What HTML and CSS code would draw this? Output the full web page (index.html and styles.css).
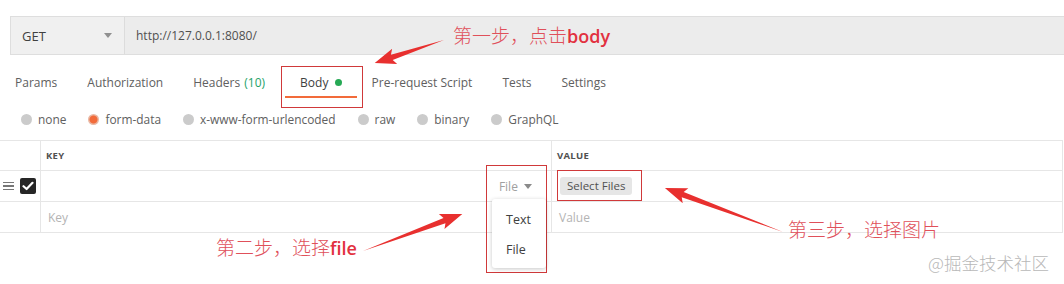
FILE: index.html
```html
<!DOCTYPE html>
<html lang="zh-CN">
<head>
  <meta charset="UTF-8" />
  <title>Postman form-data</title>
  <link rel="stylesheet" href="styles.css">
</head>
<body>

  <div class="request-bar">
    <div class="method">
      <span>GET</span>
      <span class="caret"></span>
    </div>
    <div class="url">http://127.0.0.1:8080/</div>
  </div>

  <nav class="tabs">
    <a class="tab">Params</a>
    <a class="tab">Authorization</a>
    <a class="tab">Headers <span class="count">(10)</span></a>
    <a class="tab active">Body <span class="dot"></span></a>
    <a class="tab">Pre-request Script</a>
    <a class="tab">Tests</a>
    <a class="tab">Settings</a>
  </nav>

  <div class="body-types">
    <label class="radio"><span class="circle"></span>none</label>
    <label class="radio"><span class="circle checked"></span>form-data</label>
    <label class="radio"><span class="circle"></span>x-www-form-urlencoded</label>
    <label class="radio"><span class="circle"></span>raw</label>
    <label class="radio"><span class="circle"></span>binary</label>
    <label class="radio"><span class="circle"></span>GraphQL</label>
  </div>

  <div class="kv-table">
    <div class="kv-row head">
      <div class="cell lead"></div>
      <div class="cell key">KEY</div>
      <div class="cell value">VALUE</div>
    </div>
    <div class="kv-row">
      <div class="cell lead">
        <span class="handle"><i></i><i></i><i></i></span>
        <span class="check">
          <svg width="12" height="10" viewBox="0 0 12 10"><path d="M1.5 5.2 L4.6 8 L10.5 1.8" fill="none" stroke="#fff" stroke-width="2.2" stroke-linecap="round" stroke-linejoin="round"/></svg>
        </span>
      </div>
      <div class="cell key type-cell">
        <span class="type-select">File <span class="caret small"></span></span>
        <div class="menu">
          <div class="menu-item">Text</div>
          <div class="menu-item">File</div>
        </div>
      </div>
      <div class="cell value">
        <span class="file-btn">Select Files</span>
      </div>
    </div>
    <div class="kv-row">
      <div class="cell lead"></div>
      <div class="cell key placeholder">Key</div>
      <div class="cell value placeholder">Value</div>
    </div>
  </div>

  <!-- annotations drawn on top of the screenshot -->
  <div class="notes">
    <div class="mark mark-body"></div>
    <div class="mark mark-file"></div>
    <div class="mark mark-select"></div>

    <svg class="arrows" width="1064" height="284">
      <g transform="translate(444 40) rotate(161.6)">
        <polygon points="0,0 55,-2.8 52,-8 73,0 52,8 55,2.8" fill="#e8302f"/>
      </g>
      <g transform="translate(363 251) rotate(-20.5)">
        <polygon points="0,0 87,-2.8 84,-8 106,0 84,8 87,2.8" fill="#e8302f"/>
      </g>
      <g transform="translate(783 232) rotate(-159.6)">
        <polygon points="0,0 107,-2.8 104,-8 126,0 104,8 107,2.8" fill="#e8302f"/>
      </g>
    </svg>

    <div class="note note-1">第一步，点击<b>body</b></div>
    <div class="note note-2">第二步，选择<b>file</b></div>
    <div class="note note-3">第三步，选择图片</div>
    <div class="watermark">@掘金技术社区</div>
  </div>

</body>
</html>
```

FILE: styles.css
```css
body {
  margin: 0;
  background: #fff;
  color: #505050;
  font-family: "Open Sans", "Noto Sans", sans-serif;
  font-size: 12px;
  position: relative;
  width: 1064px;
  height: 284px;
  overflow: hidden;
}

/* Request bar */
.request-bar {
  display: flex;
  margin: 16px 0 0 10px;
  height: 39px;
  border-top: 1px solid #dedede;
  border-bottom: 1px solid #dedede;
  box-sizing: border-box;
}

.method {
  width: 115px;
  box-sizing: border-box;
  display: flex;
  align-items: center;
  justify-content: space-between;
  padding: 0 12px 0 11px;
  background: #f0f0f0;
  border-left: 1px solid #dedede;
  border-right: 1px solid #dcdcdc;
  font-size: 13px;
  color: #404040;
}

.caret {
  width: 0;
  height: 0;
  border-left: 4px solid transparent;
  border-right: 4px solid transparent;
  border-top: 5px solid #909090;
}

.caret.small {
  display: inline-block;
  margin-left: 3px;
  vertical-align: 2px;
  border-top-color: #8a8a8a;
}

.url {
  flex: 1;
  display: flex;
  align-items: center;
  padding-left: 11px;
  background: #ececec;
  color: #505050;
}

/* Tabs */
.tabs {
  display: flex;
  margin-top: 5px;
}

.tab {
  padding: 14px 15px 4px;
  line-height: 18px;
  border-bottom: 2px solid transparent;
  color: #606060;
  white-space: nowrap;
}

.tab.active {
  border-bottom-color: #f26b3a;
  color: #404040;
}

.count {
  color: #26a269;
  margin-left: 1px;
  margin-right: 5px;
}

.dot {
  display: inline-block;
  width: 7px;
  height: 7px;
  margin-left: 3px;
  border-radius: 50%;
  background: #26a955;
  vertical-align: 1px;
}

/* Body type radios */
.body-types {
  display: flex;
  align-items: center;
  gap: 22px;
  height: 42px;
  padding-left: 21px;
  box-sizing: border-box;
}

.radio {
  display: flex;
  align-items: center;
  gap: 6px;
  color: #606060;
  font-size: 11.9px;
}

.circle {
  width: 11px;
  height: 11px;
  border-radius: 50%;
  background: #cbcbcb;
}

.circle.checked {
  background: radial-gradient(circle, #f26b3a 0 3.5px, #e9b7a3 4.5px);
}

/* Key / value table */
.kv-table {
  width: 1062px;
  border-top: 1px solid #e6e6e6;
  border-right: 1px solid #e6e6e6;
}

.kv-row {
  display: grid;
  grid-template-columns: 40px 511px 1fr;
  height: 31px;
  border-bottom: 1px solid #e6e6e6;
  box-sizing: border-box;
}

.kv-row.head {
  height: 30px;
}

.cell {
  display: flex;
  align-items: center;
  border-left: 1px solid #e6e6e6;
  position: relative;
}

.cell.lead {
  border-left: none;
  gap: 6px;
  padding-left: 3px;
}

.head .cell {
  font-size: 9.5px;
  font-weight: 700;
  letter-spacing: 0.3px;
  color: #505050;
}

.head .key {
  padding-left: 5px;
}

.head .value {
  padding-left: 5px;
}

.handle {
  display: flex;
  flex-direction: column;
  gap: 2px;
  width: 11px;
}

.handle i {
  display: block;
  height: 1.5px;
  background: #777;
}

.check {
  width: 16px;
  height: 16px;
  border-radius: 2px;
  background: #262626;
  display: flex;
  align-items: center;
  justify-content: center;
}

.type-cell {
  justify-content: flex-end;
  padding-right: 19px;
}

.type-select {
  color: #a0a0a0;
}

.menu {
  position: absolute;
  right: 5px;
  top: 28px;
  width: 54px;
  height: 69px;
  box-sizing: border-box;
  background: #fff;
  border-radius: 3px;
  box-shadow: 0 1px 4px rgba(0, 0, 0, 0.22);
  padding-top: 6px;
  z-index: 2;
}

.menu-item {
  height: 30px;
  line-height: 30px;
  padding-left: 14px;
  color: #404040;
  font-size: 12.5px;
}

.value {
  padding-left: 8px;
}

.file-btn {
  background: #e6e6e6;
  border-radius: 3px;
  padding: 1px 7px;
  line-height: 16px;
  font-size: 11.5px;
  color: #505050;
}

.placeholder {
  color: #b4b4b4;
}

.key.placeholder {
  padding-left: 7px;
}

.value.placeholder {
  padding-left: 7px;
}

/* Annotation layer */
.notes {
  position: absolute;
  left: 0;
  top: 0;
  width: 1064px;
  height: 284px;
  pointer-events: none;
}

.arrows {
  position: absolute;
  left: 0;
  top: 0;
}

.mark {
  position: absolute;
  border: 1px solid #d0393a;
}

.mark-body {
  left: 281px;
  top: 66px;
  width: 80px;
  height: 40px;
}

.mark-file {
  left: 486px;
  top: 165px;
  width: 59px;
  height: 106px;
}

.mark-select {
  left: 557px;
  top: 170px;
  width: 83px;
  height: 29px;
}

.note {
  position: absolute;
  color: #e0505a;
  font-family: "Noto Sans CJK SC", sans-serif;
  font-weight: 300;
  font-size: 19px;
  line-height: 24px;
  white-space: nowrap;
}

.note b {
  font-family: "Open Sans", sans-serif;
  font-weight: 600;
  font-size: 18px;
  color: #e23140;
}

.note-1 {
  left: 453px;
  top: 23px;
}

.note-2 {
  left: 216px;
  top: 235px;
}

.note-3 {
  left: 788px;
  top: 217px;
}

.watermark {
  position: absolute;
  left: 928px;
  top: 251px;
  font-family: "Noto Sans CJK SC", sans-serif;
  font-weight: 300;
  font-size: 17.5px;
  line-height: 24px;
  color: #b8b8b8;
}
```
